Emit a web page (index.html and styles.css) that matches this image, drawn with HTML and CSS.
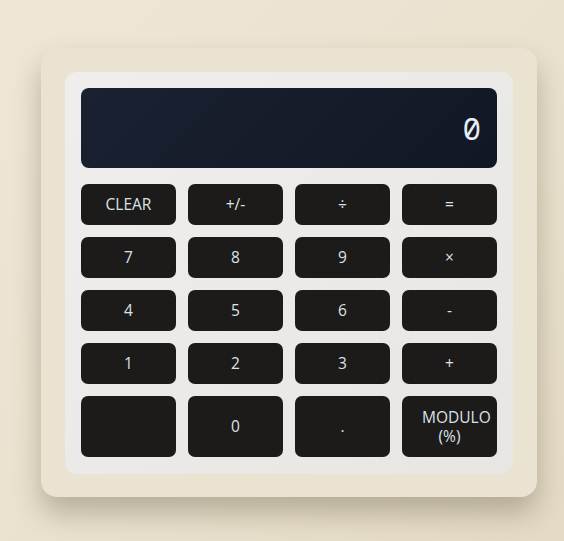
FILE: index.html
```html
<!DOCTYPE html>
<html>
<head>
<meta charset="utf-8">
<link rel="stylesheet" href="styles.css">
</head>
<body>
<div class="frame">
  <div class="panel">
    <div class="display"><span class="value">0</span></div>
    <div class="keys">
      <button class="key">CLEAR</button>
      <button class="key">+/-</button>
      <button class="key">÷</button>
      <button class="key">=</button>
      <button class="key">7</button>
      <button class="key">8</button>
      <button class="key">9</button>
      <button class="key">×</button>
      <button class="key">4</button>
      <button class="key">5</button>
      <button class="key">6</button>
      <button class="key">-</button>
      <button class="key">1</button>
      <button class="key">2</button>
      <button class="key">3</button>
      <button class="key">+</button>
      <button class="key tall"></button>
      <button class="key tall">0</button>
      <button class="key tall">.</button>
      <button class="key tall">MODULO (%)</button>
    </div>
  </div>
</div>
</body>
</html>
```

FILE: styles.css
```css
html, body {
  margin: 0;
  height: 100%;
}
body {
  background: linear-gradient(135deg, #eee7d8 0%, #e9e1cd 60%, #e4dac6 100%);
  font-family: "Noto Sans", sans-serif;
  padding: 48px 0 0 41px;
  box-sizing: border-box;
}
.frame {
  width: 496px;
  height: 449px;
  box-sizing: border-box;
  padding: 24px;
  background: #ebe3d1;
  border-radius: 16px;
  box-shadow: 0 16px 28px rgba(80, 70, 50, 0.33);
}
.panel {
  height: 402px;
  box-sizing: border-box;
  padding: 16px;
  background: linear-gradient(135deg, #efeeec 0%, #e8e6e3 100%);
  border-radius: 12px;
  display: flex;
  flex-direction: column;
  gap: 16px;
}
.display {
  height: 80px;
  border-radius: 8px;
  background: linear-gradient(135deg, #1a2130 0%, #111725 100%);
  display: flex;
  align-items: center;
  justify-content: flex-end;
  padding-right: 16px;
}
.value {
  font-family: "Noto Sans Mono", monospace;
  font-size: 31px;
  font-weight: 400;
  color: #e6edf4;
  font-variant-numeric: slashed-zero;
}
.keys {
  display: grid;
  grid-template-columns: repeat(4, 95px);
  grid-template-rows: 41px 41px 41px 41px 61px;
  gap: 12px;
}
.key {
  border: none;
  margin: 0;
  background: #1d1b19;
  border-radius: 7px;
  color: #dbe2ea;
  font-family: "Open Sans", sans-serif;
  font-size: 15.5px;
  line-height: 19px;
  padding: 0 20px;
  text-align: center;
}
```
